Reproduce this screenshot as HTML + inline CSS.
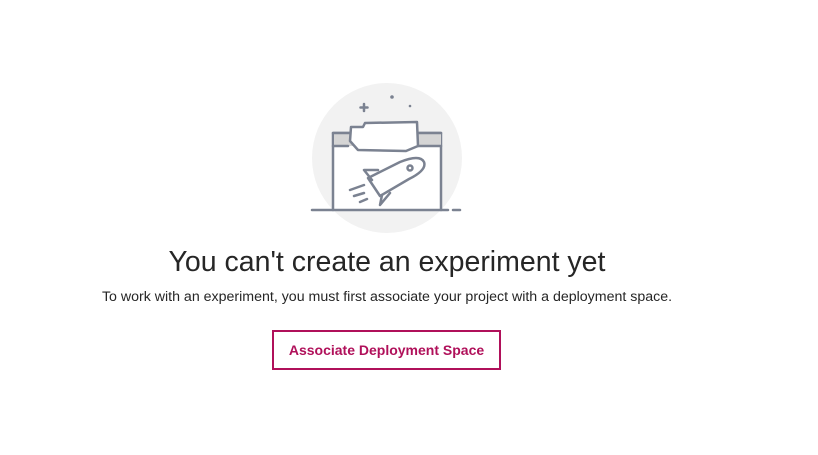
<!DOCTYPE html>
<html><head><style>
body{margin:0;width:818px;height:455px;background:#fff;font-family:"Liberation Sans",sans-serif;position:relative;overflow:hidden}
.t{position:absolute;left:0;width:774px;text-align:center;color:#262626}
h1{position:absolute;top:246px;left:0;width:774px;margin:0;text-align:center;font-size:28.5px;font-weight:400;color:#262626}
.s{top:289px;font-size:14.2px}
.b{position:absolute;left:272px;top:330px;width:225px;height:36px;border:2px solid #b0105a;color:#b0105a;font-size:14px;font-weight:bold;text-align:center;line-height:36px}
</style></head><body>
<svg width="818" height="455" style="position:absolute;left:0;top:0">
<circle cx="387" cy="158" r="75" fill="#f2f2f2"/>
<g fill="none" stroke="#7b8291" stroke-width="2.5" stroke-linecap="round" stroke-linejoin="round">
<path d="M333 210V133h108v77" fill="#fff"/>
<path d="M334 134h107v12H334z" fill="#d5d5d5" stroke="none"/>
<path d="M333 133h108" />
<path d="M333 146h15M418 146h23"/>
<path d="M351 127h12l2-4 52-1 1 24-12 5-48-1-8-9z" fill="#fff"/>
<path d="M312 210h136M453 210h7"/>
<path d="M364 104v7M360.5 107.5h7"/>
<path d="M368 178l32-16q20-8 24 0q3 8-15 17l-29 17z"/>
<path d="M372 180l-8-10 14 0M382 195l-2 10 10-12"/>
<circle cx="410" cy="168" r="2.5"/>
<path d="M350 190l14-5M354 196l10-3M360 202l7-3"/>
</g>
<circle cx="392" cy="97" r="1.8" fill="#7b8291"/>
<circle cx="410" cy="106" r="1.3" fill="#7b8291"/>
</svg>
<h1>You can't create an experiment yet</h1>
<div class="t s">To work with an experiment, you must first associate your project with a deployment space.</div>
<div class="b">Associate Deployment Space</div>
</body></html>
